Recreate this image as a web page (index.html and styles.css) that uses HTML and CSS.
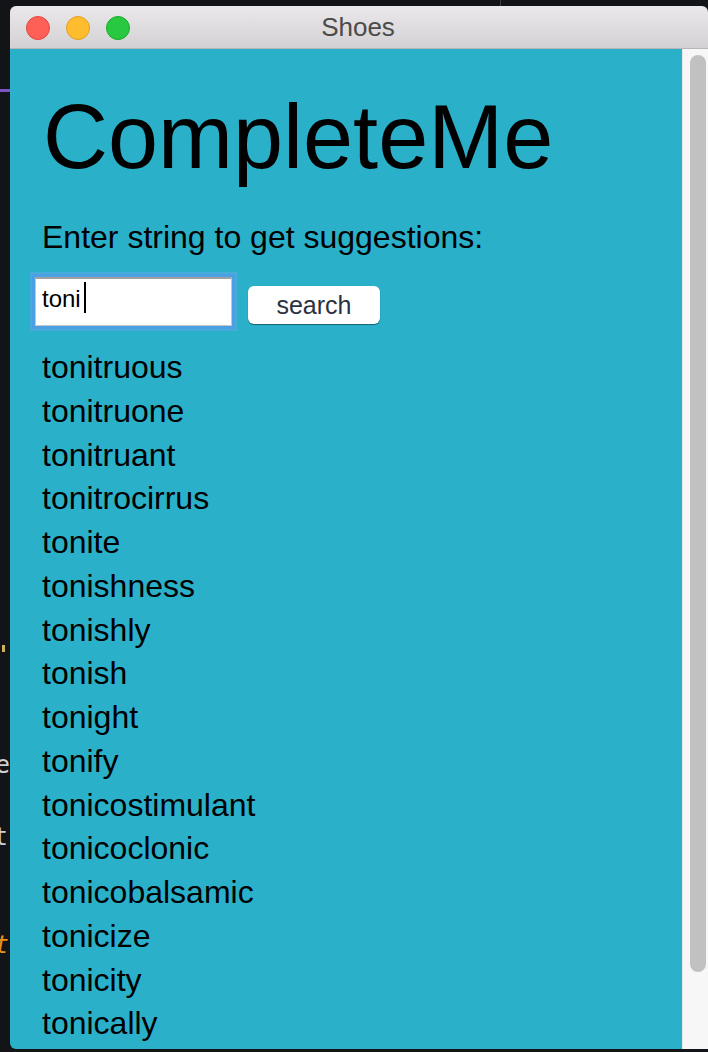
FILE: index.html
```html
<!DOCTYPE html>
<html>
<head>
<meta charset="utf-8">
<title>Shoes</title>
<link rel="stylesheet" href="styles.css">
</head>
<body>
<div class="screen">
  <div class="backdrop" aria-hidden="true">
    <span class="bd-purple"></span>
    <span class="bd-yellow"></span>
    <span class="bd-glyph bd-e">e</span>
    <span class="bd-glyph bd-t">t</span>
    <span class="bd-glyph bd-ot">t</span>
    <span class="bd-topline"></span>
  </div>
  <div class="window">
    <div class="titlebar">
      <div class="lights">
        <span class="light close"></span>
        <span class="light min"></span>
        <span class="light max"></span>
      </div>
      <div class="title">Shoes</div>
      <div></div>
    </div>
    <div class="win-body">
      <main class="content">
        <h1 class="heading">CompleteMe</h1>
        <p class="prompt">Enter string to get suggestions:</p>
        <div class="search-row">
          <div class="field"><span class="field-text">toni</span><span class="caret"></span></div>
          <button class="search-btn">search</button>
        </div>
        <ul class="results">
          <li>tonitruous</li>
          <li>tonitruone</li>
          <li>tonitruant</li>
          <li>tonitrocirrus</li>
          <li>tonite</li>
          <li>tonishness</li>
          <li>tonishly</li>
          <li>tonish</li>
          <li>tonight</li>
          <li>tonify</li>
          <li>tonicostimulant</li>
          <li>tonicoclonic</li>
          <li>tonicobalsamic</li>
          <li>tonicize</li>
          <li>tonicity</li>
          <li>tonically</li>
        </ul>
      </main>
      <div class="scrollbar"><div class="thumb"></div></div>
    </div>
  </div>
</div>
</body>
</html>
```

FILE: styles.css
```css
* { box-sizing: border-box; }

html, body {
  margin: 0;
  padding: 0;
  width: 708px;
  height: 1052px;
  overflow: hidden;
  background: #131417;
  font-family: "Liberation Sans", Arial, sans-serif;
}

.screen {
  position: relative;
  width: 708px;
  height: 1052px;
  padding: 6px 0 0 10px;
  display: flex;
}

.backdrop {
  position: absolute;
  left: 0;
  top: 0;
  width: 10px;
  height: 100%;
  overflow: hidden;
}

.bd-purple {
  position: absolute;
  left: 0;
  top: 89px;
  width: 10px;
  height: 3px;
  background: #7a55c4;
}

.bd-yellow {
  position: absolute;
  left: 2px;
  top: 645px;
  width: 3px;
  height: 7px;
  background: #c9b45a;
}

.bd-glyph {
  position: absolute;
  font-family: "DejaVu Sans Mono", monospace;
  font-size: 24px;
  line-height: 24px;
  color: #cfcfcf;
}

.bd-e { right: 0; top: 753px; }
.bd-t { right: 2px; top: 825px; }
.bd-ot { right: 1px; top: 933px; color: #e8901a; font-style: italic; }

.bd-topline {
  position: fixed;
  left: 500px;
  top: 0;
  width: 1px;
  height: 6px;
  background: #3c3d40;
}

.window {
  flex: 1;
  height: 1043px;
  display: flex;
  flex-direction: column;
  border-radius: 6px 6px 0 6px;
  overflow: hidden;
}

.titlebar {
  height: 43px;
  flex: none;
  display: grid;
  grid-template-columns: 1fr auto 1fr;
  align-items: center;
  background: linear-gradient(#eae8ea, #d3d1d3);
  border-bottom: 1px solid #b7b5b7;
}

.lights {
  display: flex;
  gap: 16px;
  padding-left: 16px;
  margin-top: 1px;
}

.light {
  width: 24px;
  height: 24px;
  border-radius: 50%;
}

.light.close { background: #fe5f57; border: 1px solid #e2463f; }
.light.min { background: #febc2e; border: 1px solid #dea123; }
.light.max { background: #28c840; border: 1px solid #1aab29; }

.title {
  font-size: 26px;
  color: #4b4b4b;
  margin: 1px 0 0 -2px;
}

.win-body {
  flex: 1;
  display: flex;
  min-height: 0;
}

.content {
  flex: 1;
  background: #2bb0ca;
  padding: 38px 0 0 25px;
  color: #000;
}

.heading {
  margin: 0 0 0 8px;
  font-weight: normal;
  font-size: 90px;
  line-height: 100px;
}

.prompt {
  margin: 30px 0 0 7px;
  font-size: 32px;
  line-height: 40px;
}

.search-row {
  margin-top: 20px;
  display: flex;
  align-items: flex-start;
}

.field {
  width: 197px;
  height: 49px;
  display: flex;
  align-items: flex-start;
  padding-left: 6px;
  background: #fff;
  border: 1px solid #c6c6c6;
  border-top: 2px solid #a0a0a0;
  box-shadow: 0 0 0 3px #4aa0e2, 0 0 0 5px rgba(92, 170, 230, 0.6);
}

.field-text {
  margin-top: 6px;
  font-size: 24px;
  line-height: 27px;
  color: #000;
}

.caret {
  width: 2px;
  height: 31px;
  margin: 3px 0 0 3px;
  background: #000;
}

.search-btn {
  margin: 9px 0 0 16px;
  width: 132px;
  height: 38px;
  padding: 0;
  border: none;
  border-radius: 6px;
  background: #fff;
  box-shadow: 0 1px 1px rgba(0, 0, 0, 0.45);
  font-family: "Liberation Sans", Arial, sans-serif;
  font-size: 25px;
  line-height: 38px;
  color: #2b3140;
}

.results {
  list-style: none;
  margin: 20px 0 0 7px;
  padding: 0;
  font-size: 32px;
  line-height: 43.75px;
}

.scrollbar {
  width: 26px;
  flex: none;
  background: #f7f7f7;
  border-left: 1px solid #e6e6e6;
  padding: 6px 2px 0 7px;
}

.thumb {
  width: 16px;
  height: 917px;
  border-radius: 8px;
  background: #c1c1c1;
}
```
